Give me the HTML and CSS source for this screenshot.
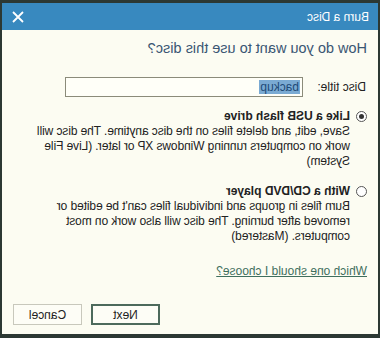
FILE: index.html
```html
<!DOCTYPE html>
<html lang="en">
<head>
  <meta charset="UTF-8" />
  <title>Burn a Disc</title>
  <link rel="stylesheet" href="styles.css">
</head>
<body>

<div class="dialog">
  <div class="title-bar">
    <span class="title-text">Burn a Disc</span>
    <svg class="close-icon" width="12" height="12" viewBox="0 0 12 12">
      <path d="M1 1 L11 11 M11 1 L1 11" stroke="#fff" stroke-width="1.8" fill="none" />
    </svg>
  </div>

  <div class="content">
    <h1 class="question">How do you want to use this disc?</h1>

    <div class="title-row">
      <label class="field-label">Disc title:</label>
      <div class="text-box"><span class="selected">backup</span></div>
    </div>

    <div class="option">
      <div class="option-head">
        <span class="radio checked"></span>
        <span class="option-name">Like a USB flash drive</span>
      </div>
      <p class="option-desc wide">Save, edit, and delete files on the disc anytime. The disc will work on computers running Windows XP or later. (Live File System)</p>
    </div>

    <div class="option second">
      <div class="option-head">
        <span class="radio"></span>
        <span class="option-name">With a CD/DVD player</span>
      </div>
      <p class="option-desc">Burn files in groups and individual files can't be edited or removed after burning. The disc will also work on most computers. (Mastered)</p>
    </div>

    <a class="help-link" href="#">Which one should I choose?</a>

    <div class="buttons">
      <button class="btn btn-default">Next</button>
      <button class="btn">Cancel</button>
    </div>
  </div>
</div>

</body>
</html>
```

FILE: styles.css
```css
:root {
  --frame: #2c3833;
  --bar: #3889bf;
  --bg: #fcfcf2;
  --text: #222;
  --heading: #3a5673;
  --link: #3f6f5e;
}
html, body {
  margin: 0;
  padding: 0;
  background: var(--frame);
}
body {
  font-family: "Liberation Sans", Arial, sans-serif;
  font-size: 12px;
  color: var(--text);
}
.dialog {
  width: 380px;
  height: 338px;
  box-sizing: border-box;
  border: 2px solid var(--frame);
  border-top-width: 3px;
  border-bottom-width: 4px;
  background: var(--bg);
  display: flex;
  flex-direction: column;
  transform: scaleX(-1);
}
.title-bar {
  height: 27px;
  background: var(--bar);
  color: #fff;
  display: flex;
  align-items: center;
  justify-content: space-between;
  padding: 0 10px 0 9px;
  font-size: 12px;
}
.close-icon {
  display: block;
}
.content {
  padding: 0 11px;
  display: flex;
  flex-direction: column;
}
.question {
  margin: 8px 0 0;
  font-size: 14.5px;
  line-height: 20px;
  font-weight: normal;
  color: var(--heading);
}
.title-row {
  margin-top: 19px;
  display: flex;
  align-items: center;
}
.field-label {
  width: 63px;
  padding-left: 1px;
}
.text-box {
  width: 238px;
  height: 20px;
  box-sizing: border-box;
  border: 1px solid #8b8b7a;
  background: #fffff8;
  padding: 2px 2px;
  line-height: 14px;
}
.selected {
  background: #7aaad3;
  color: #1e4a78;
  padding: 0 1px;
}
.option {
  margin-top: 12px;
}
.option.second {
  margin-top: 15px;
}
.option-head {
  display: flex;
  align-items: center;
  gap: 6px;
  line-height: 15px;
}
.radio {
  width: 11px;
  height: 11px;
  box-sizing: border-box;
  border: 1px solid #555;
  border-radius: 50%;
  background: #fff;
  display: flex;
  align-items: center;
  justify-content: center;
}
.radio.checked::after {
  content: "";
  width: 5px;
  height: 5px;
  border-radius: 50%;
  background: #333;
}
.option-name {
  font-weight: bold;
}
.option-desc {
  margin: 0 0 0 17px;
  width: 318px;
  line-height: 15px;
  letter-spacing: -0.1px;
}
.option-desc.wide {
  width: 332px;
}
.help-link {
  margin-top: 20px;
  color: var(--link);
  line-height: 15px;
  align-self: flex-start;
}
.buttons {
  margin-top: 25px;
  display: flex;
  justify-content: flex-end;
  gap: 9px;
}
.btn {
  width: 69px;
  height: 21px;
  box-sizing: border-box;
  font-family: inherit;
  font-size: 12px;
  color: var(--text);
  background: #fdfdf6;
  border: 1px solid #c8c8bc;
  padding: 0;
}
.btn-default {
  border: 2px solid #4d6a5c;
}
```
